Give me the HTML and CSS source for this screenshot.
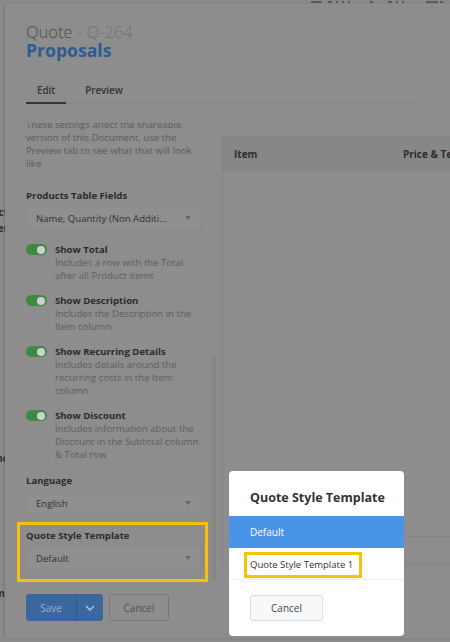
FILE: index.html
```html
<!DOCTYPE html>
<html>
<head>
<meta charset="utf-8">
<link rel="stylesheet" href="styles.css">
</head>
<body>
<div class="page">
  <div class="page-top">
    <span class="tb w11"></span><span class="tb w4 ml6"></span><span class="tb w2 ml4"></span><span class="tb w2 ml4"></span><span class="tb w2 ml4"></span>
    <span class="tb w3 ml20"></span><span class="tb w4 ml15"></span><span class="tb w2 ml4"></span><span class="tb w2 ml4"></span><span class="tb w12 ml22"></span><span class="tb w3 ml2"></span>
  </div>
  <div class="page-strip">
    <div class="ln" style="top:30px"></div>
    <div class="ln" style="top:107px"></div>
    <div class="ln" style="top:142px"></div>
    <div class="ln" style="top:154px"></div>
    <div class="frag" style="top:205px">Product</div>
    <div class="frag" style="top:221px">Order</div>
    <div class="ln" style="top:280px"></div>
    <div class="ln" style="top:293px"></div>
    <div class="ln" style="top:403px"></div>
    <div class="ln" style="top:415px"></div>
    <div class="frag" style="top:451px">Balanc</div>
    <div class="ln" style="top:505px"></div>
    <div class="ln" style="top:517px"></div>
    <div class="frag" style="top:586px">Termi</div>
    <div class="ln" style="top:627px"></div>
  </div>
</div>

<div class="drawer">
  <div class="side">
    <div class="head">
      <div class="title"><span class="t-main">Quote</span><span class="t-sub"> - Q-264</span></div>
      <div class="subtitle">Proposals</div>
      <div class="tabs">
        <div class="tab active">Edit</div>
        <div class="tab">Preview</div>
      </div>
    </div>
    <div class="scroll">
      <div class="scroll-inner">
        <p class="intro">These settings affect the shareable version of this Document, use the Preview tab to see what that will look like</p>

        <div class="field">
          <div class="label">Products Table Fields</div>
          <div class="select"><span>Name, Quantity (Non Additi...</span><i class="caret"></i></div>
        </div>

        <div class="toggles">
          <div class="toggle-row">
            <div class="switch"><i></i></div>
            <div class="t-text"><div class="t-label">Show Total</div><div class="t-desc">Includes a row with the Total after all Product items</div></div>
          </div>
          <div class="toggle-row">
            <div class="switch"><i></i></div>
            <div class="t-text"><div class="t-label">Show Description</div><div class="t-desc">Includes the Description in the Item column</div></div>
          </div>
          <div class="toggle-row">
            <div class="switch"><i></i></div>
            <div class="t-text"><div class="t-label">Show Recurring Details</div><div class="t-desc">Includes details around the recurring costs in the Item column</div></div>
          </div>
          <div class="toggle-row">
            <div class="switch"><i></i></div>
            <div class="t-text"><div class="t-label">Show Discount</div><div class="t-desc">Includes information about the Discount in the Subtotal column &amp; Total row</div></div>
          </div>
        </div>

        <div class="field lang">
          <div class="label">Language</div>
          <div class="select"><span>English</span><i class="caret"></i></div>
        </div>

        <div class="field highlight">
          <div class="label">Quote Style Template</div>
          <div class="select"><span>Default</span><i class="caret"></i></div>
        </div>
      </div>
      <div class="scrollbar"></div>
    </div>
    <div class="foot">
      <div class="btn-split">
        <span class="save">Save</span>
        <span class="drop"><svg width="10" height="6" viewBox="0 0 10 6"><path d="M1 1l4 4 4-4" fill="none" stroke="#b7c6da" stroke-width="1.4"/></svg></span>
      </div>
      <div class="btn-cancel">Cancel</div>
    </div>
  </div>

  <div class="main">
    <div class="table">
      <div class="thead">
        <div class="th th-item">Item</div>
        <div class="th th-price">Price &amp; Terms</div>
      </div>
      <div class="tbody"></div>
      <div class="trow"></div>
    </div>
  </div>
</div>

<div class="modal">
  <div class="m-title">Quote Style Template</div>
  <div class="m-list">
    <div class="m-item selected">Default</div>
    <div class="m-item"><span class="mark">Quote Style Template 1</span></div>
  </div>
  <div class="m-foot">
    <div class="m-cancel">Cancel</div>
  </div>
</div>
</body>
</html>
```
FILE: styles.css
```css
* { box-sizing: border-box; }
html, body { margin: 0; padding: 0; }
body {
  width: 450px;
  height: 642px;
  overflow: hidden;
  background: #8a8a8a;
  font-family: "Open Sans", "Noto Sans", sans-serif;
  position: relative;
}

/* background page peeking out */
.page { position: absolute; inset: 0; }
.page-top {
  position: absolute; left: 311px; top: 1px;
  display: flex; align-items: flex-start;
}
.tb { display: block; height: 2px; background: #5a5a5a; }
.w2 { width: 2px; } .w3 { width: 3px; } .w4 { width: 4px; } .w11 { width: 11px; } .w12 { width: 12px; }
.ml2 { margin-left: 2px; } .ml4 { margin-left: 4px; } .ml6 { margin-left: 6px; }
.ml15 { margin-left: 15px; } .ml20 { margin-left: 20px; } .ml22 { margin-left: 22px; }
.page-strip { position: absolute; left: 0; top: 0; width: 8px; height: 642px; overflow: hidden; }
.page-strip .ln { position: absolute; left: 0; width: 8px; height: 1px; background: #838383; }
.page-strip .frag {
  position: absolute; right: 0; font-size: 10px; font-weight: 700; color: #2e2e2e;
  white-space: nowrap; line-height: 14px;
}

/* drawer */
.drawer {
  position: absolute; left: 5px; top: 4px; right: -10px; bottom: 4px;
  background: #8d8d8d;
  box-shadow: -1px 0 2px rgba(0,0,0,0.12);
  display: flex;
}
.side { width: 213px; flex: none; display: flex; flex-direction: column; padding-left: 12px; }
.head { padding-top: 17px; padding-left: 9px; }
.title { font-size: 16.5px; line-height: 21px; font-weight: 300; white-space: nowrap; }
.t-main { color: #4c4c4c; }
.t-sub { color: #6f6f6f; }
.subtitle { font-size: 17.6px; line-height: 22px; font-weight: 700; color: #2e5b93; margin-top: -3px; }
.tabs { display: flex; gap: 8px; margin-top: 20px; border-bottom: 1px solid #878787; margin-right: -200px; }
.tab { font-size: 9.8px; font-weight: 600; color: #333; padding: 3px 11px 5px; line-height: 13px; border-bottom: 2px solid transparent; margin-bottom: -1px; }
.tab.active { border-bottom-color: #363636; }

.scroll { position: relative; height: 460px; margin-top: 19px; overflow: hidden; }
.scroll-inner { margin-top: -5px; width: 185px; padding-left: 9px; }
.scrollbar { position: absolute; right: 2px; top: 232px; width: 4px; height: 226px; border-radius: 2px; background: #858585; }

.intro { margin: 0; font-size: 9.6px; line-height: 13px; color: #5b5b5b; }
.label { font-size: 9.6px; font-weight: 700; line-height: 13px; color: #2b2b2b; }
.field { margin-top: 19px; }
.select {
  margin-top: 4px; height: 24px; border: 1px solid #898989; background: #8f8f8f; border-radius: 2px;
  display: flex; align-items: center; justify-content: space-between; padding: 0 9px 0 9px;
  font-size: 9.6px; color: #333;
}
.caret { width: 0; height: 0; border-left: 3.5px solid transparent; border-right: 3.5px solid transparent; border-top: 4px solid #676767; margin-right: 1px; }

.toggles { margin-top: 13px; display: flex; flex-direction: column; gap: 12px; }
.toggle-row { display: flex; align-items: flex-start; }
.switch { width: 21px; height: 11px; border-radius: 6px; background: #3e8a43; position: relative; margin-top: 1px; margin-right: 8px; flex: none; }
.switch i { position: absolute; right: 2px; top: 1.5px; width: 8px; height: 8px; border-radius: 50%; background: #cfcfcf; }
.t-label { font-size: 9.6px; font-weight: 700; line-height: 13px; color: #2b2b2b; }
.t-desc { font-size: 9.6px; line-height: 13px; color: #5e5e5e; }

.field.lang { margin-top: 13px; }
.field.highlight {
  margin: 7px -6px 0 -9px; border: 3px solid #f6c30c; padding: 4px 3px 9px 6px;
}

.foot { display: flex; gap: 6px; padding-top: 11px; padding-left: 9px; }
.btn-split { display: flex; height: 27px; border-radius: 3px; overflow: hidden; background: #3b679f; }
.save { width: 51px; display: flex; align-items: center; justify-content: center; color: #9cb0ca; font-size: 10px; border-right: 1px solid #2f5687; }
.drop { width: 26px; display: flex; align-items: center; justify-content: center; }
.btn-cancel { width: 60px; height: 27px; border: 1px solid #787878; border-radius: 3px; display: flex; align-items: center; justify-content: center; font-size: 10px; color: #505050; }

.main { flex: 1; padding: 133px 0 0 4px; }
.table { border: 1px solid #838383; border-right: none; height: 427px; display: flex; flex-direction: column; }
.thead { height: 33px; background: #878787; border-bottom: 1px solid #838383; display: flex; align-items: center; font-size: 10px; font-weight: 700; color: #2e2e2e; flex: none; }
.th-item { padding-left: 11px; width: 180px; }
.th-price { white-space: nowrap; }
.tbody { flex: 1; border-bottom: 1px solid #838383; }
.trow { height: 26px; flex: none; }

/* modal */
.modal {
  position: absolute; left: 229px; top: 471px; width: 175px; height: 165px;
  background: #fff; border-radius: 4px;
  display: flex; flex-direction: column;
}
.m-title { padding: 18px 0 0 21px; font-size: 12.5px; font-weight: 700; line-height: 18px; color: #333; height: 45px; }
.m-item { height: 32px; display: flex; align-items: center; padding-left: 21px; font-size: 9.5px; color: #333; }
.m-item.selected { background: #4a94e8; color: #fff; font-size: 10px; }
.m-item:last-child { border-bottom: 1px solid #efefef; }
.mark { border: 3px solid #f6c30c; padding: 2px 6px 2px 3px; margin-left: -6px; margin-top: 2px; line-height: 16px; }
.m-foot { padding: 15px 0 0 21px; }
.m-cancel { width: 73px; height: 26px; border: 1px solid #dcdcdc; border-radius: 3px; background: #f7f8fa; display: flex; align-items: center; justify-content: center; font-size: 10px; color: #444; }
```
